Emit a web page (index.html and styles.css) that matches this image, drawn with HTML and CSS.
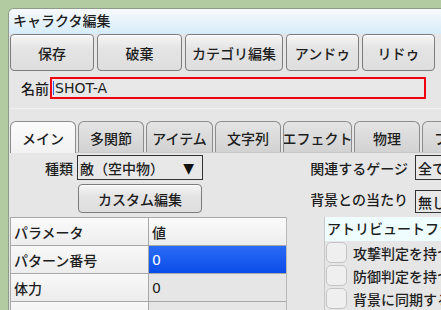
FILE: index.html
```html
<!DOCTYPE html>
<html lang="ja">
<head>
<meta charset="utf-8">
<link rel="stylesheet" href="styles.css">
</head>
<body>
<div class="win">
  <div class="title">キャラクタ編集</div>
  <div class="content">
    <div class="toolbar">
      <div class="btn b1">保存</div>
      <div class="btn b2">破棄</div>
      <div class="btn b3">カテゴリ編集</div>
      <div class="btn b4">アンドゥ</div>
      <div class="btn b5">リドゥ</div>
    </div>
    <div class="namerow">
      <span class="namelbl">名前</span>
      <div class="field"><span class="caret"></span>SHOT-A</div>
    </div>
    <div class="sep"></div>
    <div class="tabs">
      <div class="tab sel">メイン</div>
      <div class="tab">多関節</div>
      <div class="tab t3">アイテム</div>
      <div class="tab">文字列</div>
      <div class="tab t5">エフェクト</div>
      <div class="tab">物理</div>
      <div class="tab">フラグ</div>
    </div>
    <div class="pane">
      <div class="form">
        <span class="flbl">種類</span>
        <div class="combo">敵（空中物）<span class="arrow">▼</span></div>
        <span class="spacer"></span>
        <span class="rlbl">関連するゲージ</span>
        <div class="rcombo">全て</div>

        <span></span>
        <div class="btn custom">カスタム編集</div>
        <span class="spacer"></span>
        <span class="rlbl r2">背景との当たり</span>
        <div class="rcombo r2c">無し</div>
      </div>
      <div class="lower">
        <div class="table">
          <div class="cell hd">パラメータ</div><div class="cell hd">値</div>
          <div class="cell key">パターン番号</div><div class="cell val selv">0</div>
          <div class="cell key">体力</div><div class="cell val">0</div>
          <div class="cell key">攻撃力</div><div class="cell val">0</div>
        </div>
        <div class="gap"></div>
        <div class="flags">
          <div class="fhd">アトリビュートフラグ</div>
          <div class="frow"><span class="cb"></span>攻撃判定を持つ</div>
          <div class="frow"><span class="cb"></span>防御判定を持つ</div>
          <div class="frow"><span class="cb"></span>背景に同期する</div>
          <div class="frow"><span class="cb"></span>画面外で消える</div>
        </div>
      </div>
    </div>
  </div>
</div>
</body>
</html>
```

FILE: styles.css
```css
html {
  background: #b2cba0;
  overflow: hidden;
}
body {
  margin: 8px 0 0 8px;
  font-family: "DejaVu Sans", "Noto Sans CJK JP", sans-serif;
  font-size: 14px;
  font-weight: 500;
  color: #1e1e1e;
}
.win {
  width: 480px;
  height: 320px;
  background: #e6e6e6;
  border-left: 1px solid #8e9a8a;
  border-top: 1px solid #8e9a8a;
  border-top-left-radius: 6px;
  overflow: hidden;
}
.title {
  height: 25px;
  line-height: 24px;
  padding-left: 4px;
  background: linear-gradient(#f7fafc, #d6ecfa);
  white-space: nowrap;
}
.content {
  padding-left: 1px;
}
.toolbar {
  display: flex;
  gap: 3px;
}
.btn {
  box-sizing: border-box;
  height: 37px;
  border: 1px solid #7c7c7c;
  border-radius: 4px;
  background: linear-gradient(#f6f6f6, #e4e4e4 40%, #dedede);
  display: flex;
  align-items: center;
  justify-content: center;
  white-space: nowrap;
  box-shadow: inset 0 1px 0 #fff;
}
.b1 { width: 84px; }
.b2 { width: 85px; }
.b3 { width: 98px; }
.b4 { width: 73px; }
.b5 { width: 73px; }

.namerow {
  display: flex;
  align-items: center;
  height: 34px;
}
.namelbl {
  width: 40px;
  text-align: right;
  padding-right: 1px;
  box-sizing: border-box;
}
.field {
  box-sizing: border-box;
  width: 376px;
  height: 22px;
  border: 2px solid #f00010;
  background: #e8e8e8;
  display: flex;
  align-items: center;
  line-height: 18px;
  padding-left: 1px;
}
.caret {
  width: 1px;
  height: 14px;
  background: #2060ff;
  margin-right: 1px;
}
.sep {
  height: 1px;
  margin-top: 3px;
  background: #f0f0f0;
}
.tabs {
  margin-top: 12px;
  display: flex;
  gap: 2px;
  height: 31px;
  align-items: flex-end;
  border-bottom: 1px solid #c8c8c8;
}
.tab {
  box-sizing: border-box;
  width: 66px;
  height: 31px;
  border: 1px solid #8c8c8c;
  border-bottom: none;
  border-radius: 6px 6px 0 0;
  background: linear-gradient(#e4e4e4, #d2d2d2);
  display: flex;
  align-items: center;
  justify-content: center;
  white-space: nowrap;
  overflow: hidden;
  padding-top: 2px;
}
.tab.sel {
  background: linear-gradient(#fbfbfb, #f2f2f2);
  height: 32px;
  margin-bottom: -1px;
  padding-top: 0;
}
.tab.t3 { width: 67px; }
.tab.t5 { width: 69px; }

.pane {
  padding-top: 2px;
}
.form {
  display: grid;
  grid-template-columns: 67px 126px 1fr auto 74px;
  grid-template-rows: 25px 29px;
  row-gap: 4px;
  align-items: center;
}
.flbl {
  text-align: right;
  padding-right: 4px;
}
.combo {
  box-sizing: border-box;
  height: 25px;
  border: 1px solid #333;
  background: #e8e8e8;
  display: flex;
  align-items: center;
  padding-left: 2px;
  white-space: nowrap;
}
.arrow {
  margin-left: auto;
  margin-right: 8px;
  font-size: 14px;
  color: #111;
}
.custom {
  height: 29px;
  width: 124px;
  margin-left: 1px;
}
.rlbl {
  text-align: right;
  padding-right: 7px;
  white-space: nowrap;
}
.rcombo {
  box-sizing: border-box;
  height: 25px;
  border: 1px solid #333;
  background: #e8e8e8;
  display: flex;
  align-items: center;
  padding-left: 2px;
  white-space: nowrap;
}
.r2 { align-self: end; margin-bottom: 4px; }
.r2c { align-self: end; height: 23px; }

.lower {
  margin-top: 4px;
  display: flex;
  align-items: flex-start;
}
.table {
  display: grid;
  grid-template-columns: 137px 137px;
  border-top: 1px solid #a8a8a8;
  border-left: 1px solid #a8a8a8;
  background: #a8a8a8;
  row-gap: 1px;
  column-gap: 1px;
}
.cell {
  height: 27px;
  display: flex;
  align-items: center;
  padding-left: 3px;
  white-space: nowrap;
}
.hd { background: linear-gradient(#fbfbfb, #ededed); }
.key { background: linear-gradient(#f8f8f8, #ececec); }
.val { background: #e6e6e6; }
.selv {
  background: linear-gradient(#2a6cf6, #0a4ce8);
  color: #fff;
}
.gap {
  width: 37px;
  height: 100px;
  border-left: 1px solid #b8b8b8;
  border-right: 1px solid #c8c8c8;
}
.flags {
  flex: 1;
}
.fhd {
  height: 24px;
  line-height: 24px;
  background: #effdff;
  padding-left: 2px;
  white-space: nowrap;
}
.frow {
  display: flex;
  align-items: center;
  height: 23px;
  padding-left: 1px;
  white-space: nowrap;
}
.cb {
  box-sizing: border-box;
  width: 21px;
  height: 21px;
  border: 1px solid #c4c4c4;
  border-radius: 5px;
  background: #efefef;
  margin-right: 6px;
}
```
